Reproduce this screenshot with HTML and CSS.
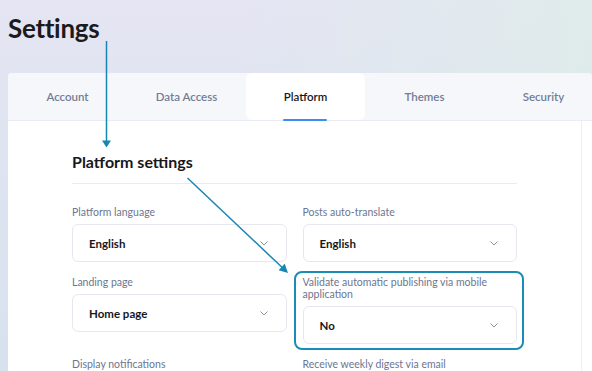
FILE: index.html
```html
<!DOCTYPE html>
<html lang="en">
<head>
    <meta charset="UTF-8">
    <meta name="viewport" content="width=device-width, initial-scale=1.0">
    <title>Settings</title>
    <link rel="stylesheet" href="styles.css">
</head>
<body>
    <h1 class="page-title">Settings</h1>

    <div class="card">
        <nav class="tabs">
            <div class="tab">Account</div>
            <div class="tab">Data Access</div>
            <div class="tab active">Platform</div>
            <div class="tab">Themes</div>
            <div class="tab">Security</div>
        </nav>

        <div class="card-body">
            <section class="panel">
                <h2 class="panel-title">Platform settings</h2>

                <div class="form-grid">
                    <div class="field">
                        <label>Platform language</label>
                        <div class="select"><span>English</span><svg class="chevron" viewBox="0 0 8 5"><path d="M0.5 0.5 L4 4 L7.5 0.5"/></svg></div>
                    </div>
                    <div class="field">
                        <label>Posts auto-translate</label>
                        <div class="select"><span>English</span><svg class="chevron" viewBox="0 0 8 5"><path d="M0.5 0.5 L4 4 L7.5 0.5"/></svg></div>
                    </div>
                    <div class="field">
                        <label>Landing page</label>
                        <div class="select"><span>Home page</span><svg class="chevron" viewBox="0 0 8 5"><path d="M0.5 0.5 L4 4 L7.5 0.5"/></svg></div>
                    </div>
                    <div class="field highlighted">
                        <label>Validate automatic publishing via mobile application</label>
                        <div class="select"><span>No</span><svg class="chevron" viewBox="0 0 8 5"><path d="M0.5 0.5 L4 4 L7.5 0.5"/></svg></div>
                    </div>
                    <div class="field">
                        <label>Display notifications</label>
                    </div>
                    <div class="field">
                        <label>Receive weekly digest via email</label>
                    </div>
                </div>
            </section>
            <div class="aside"></div>
        </div>
    </div>

    <!-- annotation arrows -->
    <svg class="arrows" width="592" height="371" viewBox="0 0 592 371">
        <line x1="106.5" y1="41" x2="106.5" y2="141" />
        <polygon points="102,140.5 111,140.5 106.5,147.5" />
        <line x1="187.5" y1="178" x2="282" y2="267.3" />
        <polygon points="278.6,270.2 284.7,263.8 288,273" />
    </svg>
</body>
</html>
```

FILE: styles.css
```css
/* Base */
html, body {
    margin: 0;
    padding: 0;
    height: 100%;
    overflow: hidden;
}

body {
    font-family: 'Lato', 'Liberation Sans', sans-serif;
    color: #17171c;
    background:
        linear-gradient(90deg, rgba(228, 229, 244, 0) 40%, rgba(222, 236, 233, 0.8) 100%),
        linear-gradient(180deg, #e5e5f3 0%, #dfe4f1 35%, #d7e2ee 100%);
    position: relative;
}

.page-title {
    margin: 0;
    padding: 12px 0 0 8px;
    font-size: 26px;
    line-height: 32px;
    font-weight: 700;
    color: #1b1b1d;
    letter-spacing: -0.3px;
}

/* Card */
.card {
    margin: 29px 0 0 8px;
    width: 584px;
    height: 298px;
    background-color: #fff;
    border-radius: 4px 4px 0 0;
    overflow: hidden;
}

.tabs {
    display: flex;
    height: 47px;
    background-color: #f5f7fb;
    border-bottom: 1px solid #e9edf3;
}

.tab {
    width: 119px;
    flex-shrink: 0;
    display: flex;
    align-items: center;
    justify-content: center;
    font-size: 11.5px;
    font-weight: 600;
    color: #737d95;
}

.tab.active {
    position: relative;
    background-color: #fff;
    border-radius: 6px;
    color: #17171c;
}

.tab.active::after {
    content: '';
    position: absolute;
    left: 37px;
    bottom: -1px;
    width: 44px;
    height: 2px;
    border-radius: 1px;
    background-color: #3a8ef0;
}

.card-body {
    display: flex;
    height: 100%;
}

.panel {
    width: 445px;
    flex-shrink: 0;
    padding: 0 64px;
    border-right: 1px solid #eceef3;
}

.panel-title {
    margin: 31px 0 0;
    padding-bottom: 11px;
    font-size: 16px;
    line-height: 20px;
    font-weight: 700;
    border-bottom: 1px solid #e8ebf1;
}

/* Form */
.form-grid {
    display: grid;
    grid-template-columns: 1fr 1fr;
    column-gap: 16px;
    row-gap: 14px;
    margin-top: 22px;
}

.field {
    position: relative;
}

.field label {
    display: block;
    font-size: 10.5px;
    line-height: 12px;
    color: #6c7690;
    margin-bottom: 6px;
}

.select {
    height: 36px;
    border: 1px solid #e5e8ef;
    border-radius: 6px;
    display: flex;
    align-items: center;
    justify-content: space-between;
    padding: 0 18px 0 16px;
    font-size: 11.5px;
    font-weight: 700;
}

.chevron {
    width: 8px;
    height: 5px;
    fill: none;
    stroke: #8b93a7;
    stroke-width: 1;
}

.highlighted::before {
    content: '';
    position: absolute;
    top: -5px;
    left: -9px;
    right: -7px;
    bottom: -6px;
    border: 2px solid #1b8cb4;
    border-radius: 8px;
}

/* Arrows */
.arrows {
    position: absolute;
    top: 0;
    left: 0;
    pointer-events: none;
}

.arrows line {
    stroke: #1787b2;
    stroke-width: 1.5;
}

.arrows polygon {
    fill: #1787b2;
}
```
